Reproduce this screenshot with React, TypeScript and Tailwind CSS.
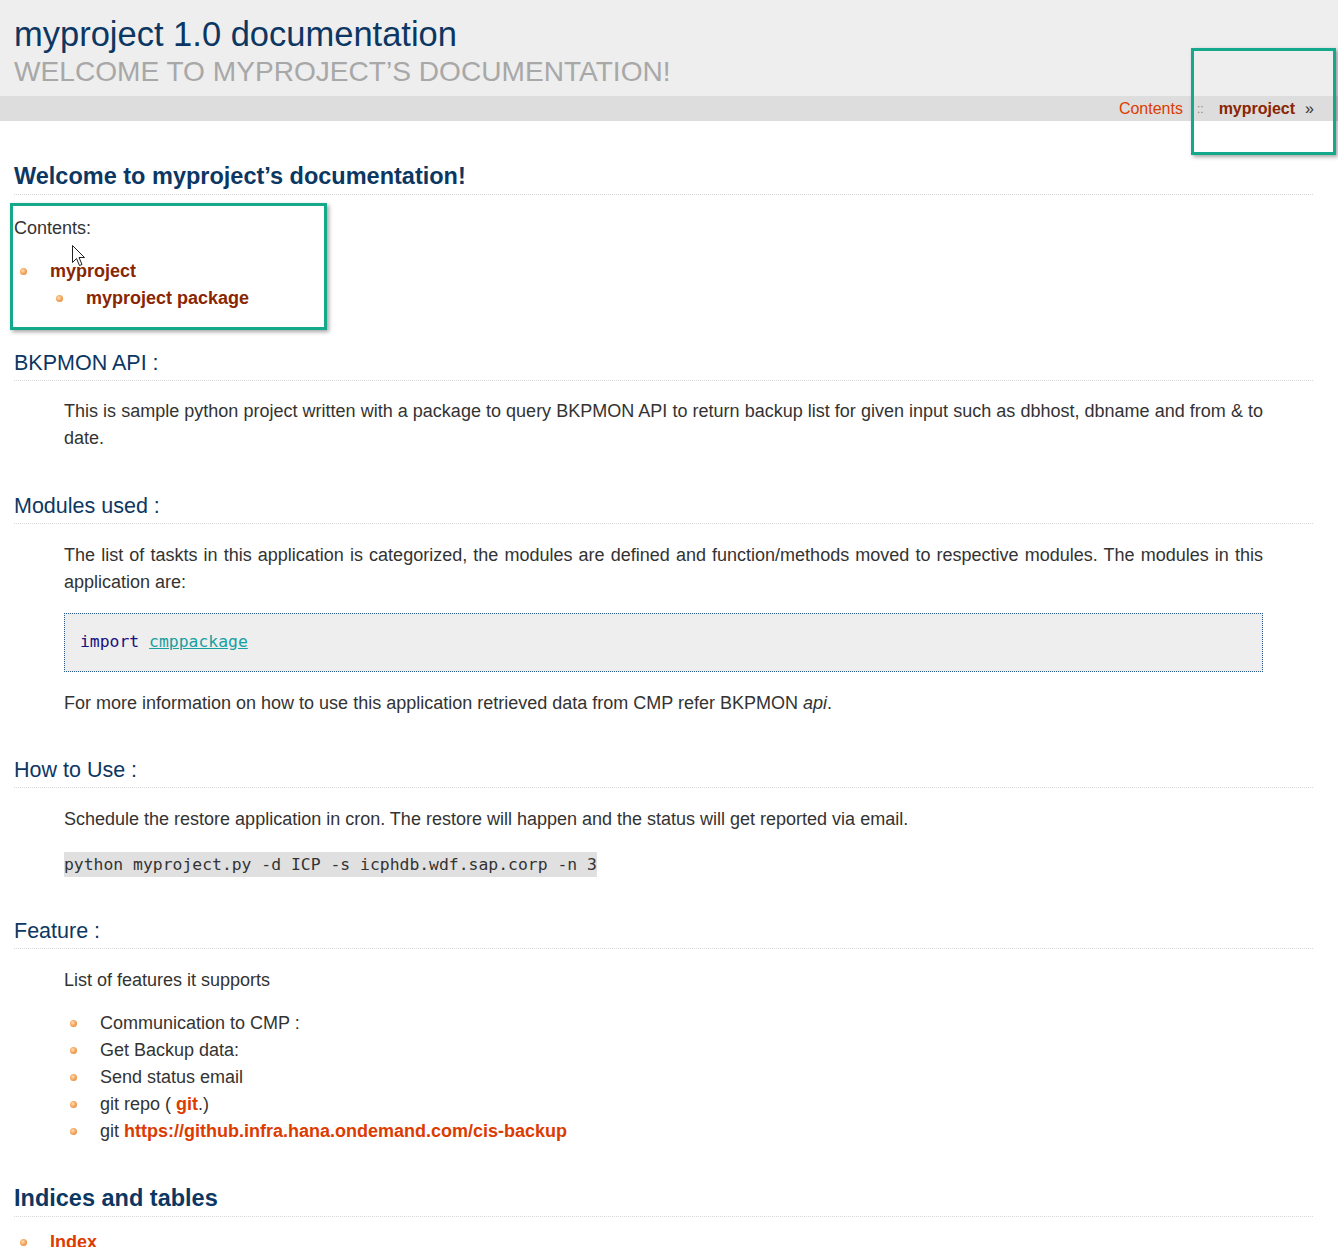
import React from "react";

const sans = { fontFamily: '"Liberation Sans", Arial, sans-serif' };
const mono = { fontFamily: '"DejaVu Sans Mono", monospace' };

function Bullet() {
  return (
    <span className="inline-block h-[7px] w-[7px] rounded-full bg-[radial-gradient(circle_at_40%_40%,#ffe0b8_0%,#f5a860_45%,#e07a28_100%)]" />
  );
}

function Item({
  children,
  bulletLeft,
  textLeft,
}: {
  children: React.ReactNode;
  bulletLeft: number;
  textLeft: number;
}) {
  return (
    <li className="flex h-[27px] items-center">
      <span style={{ width: textLeft, paddingLeft: bulletLeft }} className="flex shrink-0 items-center">
        <Bullet />
      </span>
      <span>{children}</span>
    </li>
  );
}

function H2({ children, className = "" }: { children: React.ReactNode; className?: string }) {
  return (
    <h2
      className={`border-b border-dotted border-[#d6d6d6] pb-[3px] text-[21.5px] leading-[27px] font-normal text-[#0c3762] ${className}`}
    >
      {children}
    </h2>
  );
}

function H1({ children, className = "" }: { children: React.ReactNode; className?: string }) {
  return (
    <h1
      className={`border-b border-dotted border-[#d6d6d6] pb-[4px] text-[23.5px] leading-[28px] font-bold text-[#0c3762] ${className}`}
    >
      {children}
    </h1>
  );
}

export default function App() {
  return (
    <div className="relative min-h-screen w-full overflow-hidden bg-white text-[18px] text-[#333]" style={sans}>
      {/* header */}
      <div className="bg-[#eeeeee] pl-[14px] pt-[14px] pb-[7px]">
        <div className="text-[34.5px] leading-[40px] text-[#0c3762]">myproject 1.0 documentation</div>
        <div className="mt-[1px] text-[28.1px] leading-[34px] uppercase text-[#a8a8a8]">
          Welcome to myproject’s documentation!
        </div>
      </div>
      <div className="flex h-[25px] items-center justify-end bg-[#dddddd] pr-[24px] text-[16px]">
        <span className="text-[#dc3c01]">Contents</span>
        <span className="ml-[14px] mr-[15px] text-[12px] text-[#888]">::</span>
        <span className="font-bold text-[#892601]">myproject</span>
        <span className="ml-[10px] text-[#333]">»</span>
      </div>

      {/* body */}
      <div className="pl-[14px] pr-[25px]">
        <H1 className="mt-[41px]">Welcome to myproject’s documentation!</H1>
        <p className="mt-[20px] leading-[27px]">Contents:</p>
        <ul className="mt-[16px] font-bold text-[#892601]">
          <Item bulletLeft={6} textLeft={36}>myproject</Item>
          <Item bulletLeft={42} textLeft={72}>myproject package</Item>
        </ul>

        <H2 className="mt-[38px]">BKPMON API :</H2>
        <div className="mx-[50px] mt-[17px]">
          <p className="text-justify leading-[27px]">
            This is sample python project written with a package to query BKPMON API to return backup list for given
            input such as dbhost, dbname and from &amp; to date.
          </p>
        </div>

        <H2 className="mt-[41px]">Modules used :</H2>
        <div className="mx-[50px] mt-[18px]">
          <p className="text-justify leading-[27px]">
            The list of taskts in this application is categorized, the modules are defined and function/methods moved
            to respective modules. The modules in this application are:
          </p>
          <div
            className="mt-[17px] border border-dotted border-[#2a5a8c] bg-[#eeeeee] px-[15px] pt-[18px] pb-[19px] text-[16.4px] leading-[20px]"
            style={mono}
          >
            <span className="text-[#1a1080]">import</span>{" "}
            <span className="text-[#16a0a0] underline">cmppackage</span>
          </div>
          <p className="mt-[18px] leading-[27px]">
            For more information on how to use this application retrieved data from CMP refer BKPMON <em>api</em>.
          </p>
        </div>

        <H2 className="mt-[40px]">How to Use :</H2>
        <div className="mx-[50px] mt-[18px]">
          <p className="leading-[27px]">
            Schedule the restore application in cron. The restore will happen and the status will get reported via
            email.
          </p>
          <p className="mt-[18px] leading-[27px]">
            <code className="bg-[#e0e0e0] py-[3px] text-[16.4px]" style={mono}>
              python myproject.py -d ICP -s icphdb.wdf.sap.corp -n 3
            </code>
          </p>
        </div>

        <H2 className="mt-[40px]">Feature :</H2>
        <div className="mx-[50px] mt-[18px]">
          <p className="leading-[27px]">List of features it supports</p>
          <ul className="mt-[16px]">
            <Item bulletLeft={6} textLeft={36}>Communication to CMP :</Item>
            <Item bulletLeft={6} textLeft={36}>Get Backup data:</Item>
            <Item bulletLeft={6} textLeft={36}>Send status email</Item>
            <Item bulletLeft={6} textLeft={36}>
              git repo ( <span className="font-bold text-[#dc3c01]">git</span>.)
            </Item>
            <Item bulletLeft={6} textLeft={36}>
              git <span className="font-bold text-[#dc3c01]">https://github.infra.hana.ondemand.com/cis-backup</span>
            </Item>
          </ul>
        </div>

        <H1 className="mt-[39px]">Indices and tables</H1>
        <ul className="mt-[12px] font-bold text-[#dc3c01]">
          <Item bulletLeft={6} textLeft={36}>Index</Item>
        </ul>
      </div>

      {/* annotation boxes */}
      <div className="absolute left-[1191px] top-[48px] h-[107px] w-[145px] border-[3px] border-[#14a98b] shadow-[2px_2px_4px_rgba(0,0,0,0.35)]" />
      <div className="absolute left-[10px] top-[203px] h-[127px] w-[317px] border-[3px] border-[#14a98b] shadow-[2px_2px_4px_rgba(0,0,0,0.35)]" />

      {/* mouse cursor */}
      <svg className="absolute left-[72px] top-[245px]" width="14" height="22" viewBox="0 0 14 22">
        <path
          d="M0.5 0.5 L0.5 17.5 L4.5 13.5 L7.5 20.5 L10 19.5 L7 12.5 L12.5 12.5 Z"
          fill="white"
          stroke="#222"
          strokeWidth="1"
          strokeLinejoin="miter"
        />
      </svg>
    </div>
  );
}
